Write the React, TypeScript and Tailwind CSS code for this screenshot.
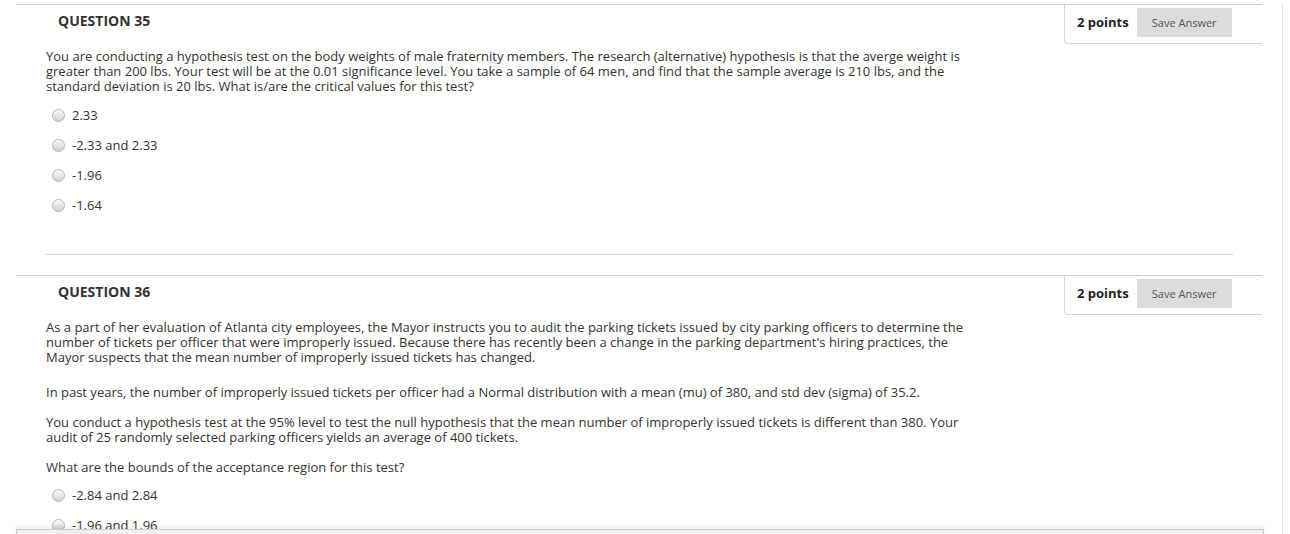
import React from 'react';

type Option = { label: string };

function Radio() {
  return (
    <span className="inline-block h-[13px] w-[13px] shrink-0 rounded-full border border-[#b4b4b4] bg-gradient-to-b from-[#f7f7f7] to-[#d2d2d2] shadow-[inset_0_1px_1px_rgba(255,255,255,0.8)]" />
  );
}

function Options({ options }: { options: Option[] }) {
  return (
    <ul>
      {options.map((o) => (
        <li key={o.label} className="flex h-[30px] items-center pl-[36px]">
          <Radio />
          <span className="ml-[7px] leading-[15px]">{o.label}</span>
        </li>
      ))}
    </ul>
  );
}

function QuestionHeader({ number }: { number: number }) {
  return (
    <div className="flex h-[39px] items-start justify-between">
      <h3 className="pl-[42px] pt-[6px] text-[14px] font-bold leading-[19px] text-[#333]">QUESTION {number}</h3>
      <div className="flex h-[39px] w-[198px] items-start rounded-bl-[4px] border-b border-l border-[#d6d6d6] pl-[12px] pt-[3px]">
        <span className="text-[13px] font-bold leading-[29px] text-[#222]">2 points</span>
        <button className="ml-[8px] h-[29px] w-[95px] bg-[#dcdcdc] text-[11px] leading-[29px] text-[#555]">Save Answer</button>
      </div>
    </div>
  );
}

export default function App() {
  return (
    <div
      className="relative h-[534px] w-[1290px] overflow-hidden bg-white text-[13px] text-[#333]"
      style={{ fontFamily: '"Open Sans", "Liberation Sans", sans-serif' }}
    >
      <div className="h-[534px] w-[1283px] border-r border-[#e2e2e2]">
        {/* Question 35 */}
        <section className="ml-[16px] mt-[4px] w-[1246px] border-t border-[#cfcfcf]">
          <QuestionHeader number={35} />
          <div className="pl-[30px] leading-[15px]">
            <p className="mt-[5px] w-[930px]">
              You are conducting a hypothesis test on the body weights of male fraternity members. The research (alternative) hypothesis is that the averge weight is greater than 200 lbs. Your test will be at the 0.01 significance level. You take a sample of 64 men, and find that the sample average is 210 lbs, and the standard deviation is 20 lbs. What is/are the critical values for this test?
            </p>
          </div>
          <div className="mt-[6px]">
            <Options options={[{ label: '2.33' }, { label: '-2.33 and 2.33' }, { label: '-1.96' }, { label: '-1.64' }]} />
          </div>
          <div className="ml-[30px] mr-[29px] mt-[34px] border-t border-[#d4d4d4]" />
        </section>

        {/* Question 36 */}
        <section className="ml-[16px] mt-[20px] w-[1246px] border-t border-[#cfcfcf]">
          <QuestionHeader number={36} />
          <div className="pl-[30px] leading-[15px]">
            <p className="mt-[5px] w-[930px]">
              As a part of her evaluation of Atlanta city employees, the Mayor instructs you to audit the parking tickets issued by city parking officers to determine the number of tickets per officer that were improperly issued. Because there has recently been a change in the parking department's hiring practices, the Mayor suspects that the mean number of improperly issued tickets has changed.
            </p>
            <p className="mt-[20px] w-[930px]">
              In past years, the number of improperly issued tickets per officer had a Normal distribution with a mean (mu) of 380, and std dev (sigma) of 35.2.
            </p>
            <p className="mt-[15px] w-[930px]">
              You conduct a hypothesis test at the 95% level to test the null hypothesis that the mean number of improperly issued tickets is different than 380. Your audit of 25 randomly selected parking officers yields an average of 400 tickets.
            </p>
            <p className="mt-[15px] w-[930px]">What are the bounds of the acceptance region for this test?</p>
          </div>
          <div className="mt-[5px]">
            <Options options={[{ label: '-2.84 and 2.84' }, { label: '-1.96 and 1.96' }]} />
          </div>
        </section>
      </div>

      {/* bottom bar */}
      <div className="absolute bottom-0 left-[16px] h-[5px] w-[1248px] border-l border-r border-t border-[#cdcdcd] bg-[#f0f0f0] shadow-[0_-2px_4px_rgba(0,0,0,0.08)]" />
    </div>
  );
}
